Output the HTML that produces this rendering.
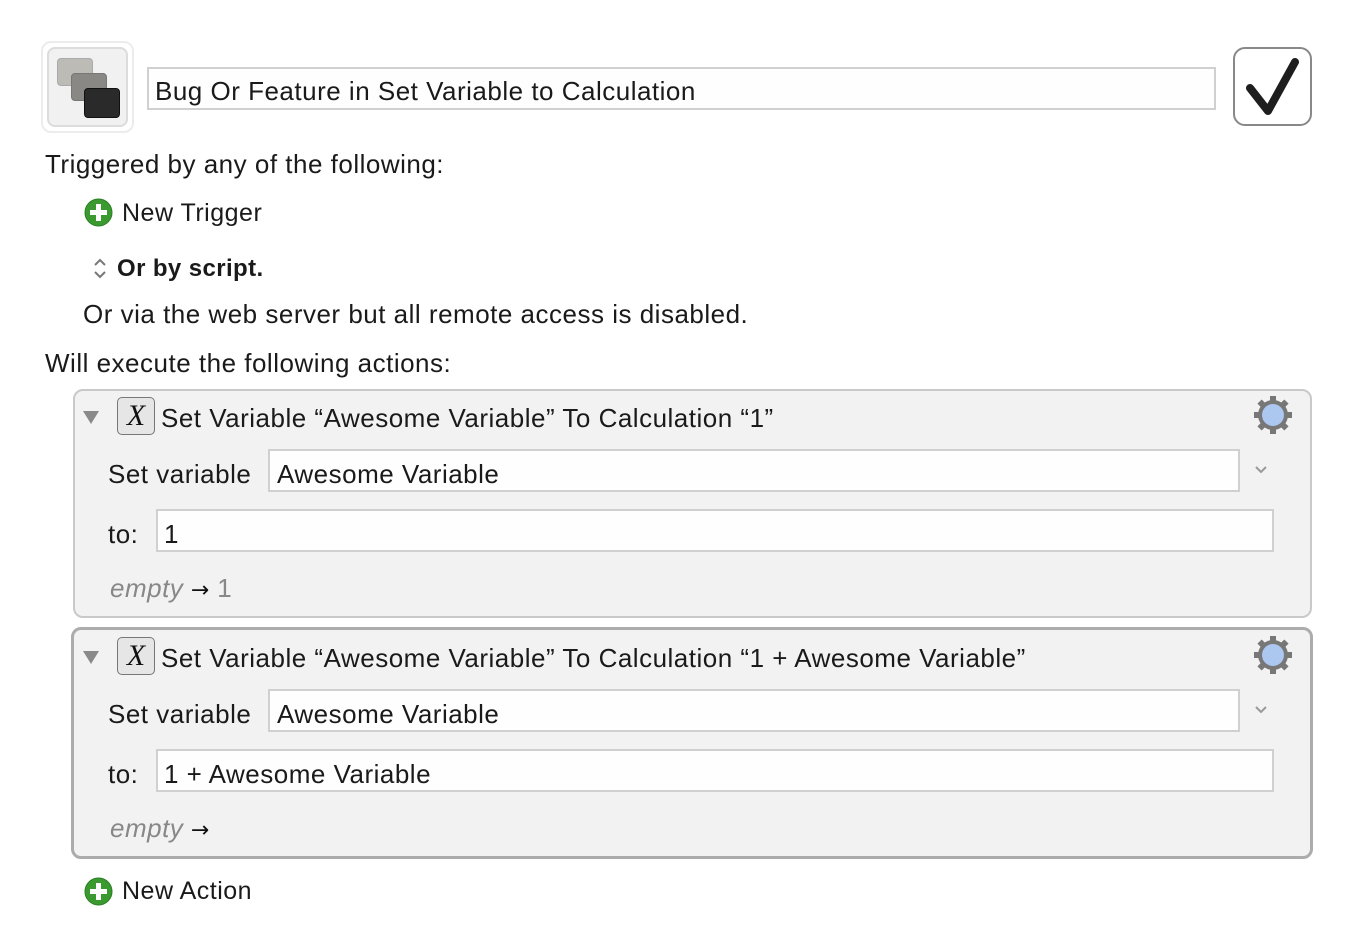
<!DOCTYPE html>
<html><head><meta charset="utf-8"><style>
body{margin:0;width:1354px;height:946px;background:#fff;font-family:"Liberation Sans",sans-serif;color:#1a1a1a;position:relative;overflow:hidden}
.a{position:absolute;white-space:nowrap;line-height:30px;font-size:26px;letter-spacing:0.5px}
.box{position:absolute;background:#f2f2f2;border-radius:10px;box-sizing:border-box}
.field{position:absolute;background:#fefefe;border:2px solid #d0d0d0;box-sizing:border-box}
.xi{position:absolute;width:38px;height:38px;box-sizing:border-box;border:1.5px solid #777;border-radius:5px;background:#e6e6e6;font-family:"Liberation Serif",serif;font-style:italic;font-size:30px;line-height:36px;text-align:center;color:#111}
.tri{position:absolute;width:0;height:0;border-left:8px solid transparent;border-right:8px solid transparent;border-top:13px solid #8a8a8a}
.gray{color:#888;font-style:italic}
.ar{font-family:"DejaVu Sans",sans-serif;font-size:22px;color:#111}
</style></head><body>
<div style="position:absolute;left:41px;top:41px;width:93px;height:92px;border:2px solid #ececec;border-radius:10px;box-sizing:border-box;background:#fff"></div>
<div style="position:absolute;left:47px;top:47px;width:81px;height:80px;border:2px solid #dcdcdc;border-radius:8px;box-sizing:border-box;background:#f1f1f1"></div>
<div style="position:absolute;left:57px;top:58px;width:34px;height:26px;background:#bdbbb6;border:1px solid #aaa;border-radius:4px"></div>
<div style="position:absolute;left:71px;top:73px;width:34px;height:26px;background:#8a8884;border:1px solid #777;border-radius:4px"></div>
<div style="position:absolute;left:84px;top:88px;width:34px;height:28px;background:#2a2a2a;border:1px solid #111;border-radius:4px"></div>

<div class="field" style="left:147px;top:67px;width:1069px;height:43px"></div>
<div class="a" style="left:155px;top:76px">Bug Or Feature in Set Variable to Calculation</div>

<div style="position:absolute;left:1233px;top:47px;width:79px;height:79px;border:2.5px solid #888;border-radius:12px;box-sizing:border-box;background:#fff"></div>
<svg style="position:absolute;left:1233px;top:47px" width="79" height="79"><path d="M17 41 L35 64 L62 15" fill="none" stroke="#1e1e1e" stroke-width="8" stroke-linecap="round" stroke-linejoin="round"/></svg>

<div class="a" style="left:45px;top:149px">Triggered by any of the following:</div>
<svg style="position:absolute;left:84px;top:198px" width="29" height="29"><circle cx="14.5" cy="14.5" r="13.5" fill="#3a9a2f" stroke="#2a7f22" stroke-width="1"/><rect x="12" y="6" width="5" height="17" fill="#fff"/><rect x="6" y="12" width="17" height="5" fill="#fff"/></svg>
<div class="a" style="left:122px;top:198px;font-size:25px">New Trigger</div>
<svg style="position:absolute;left:92px;top:257px" width="16" height="24"><path d="M3 8 L8 3 L13 8 M3 15 L8 20 L13 15" fill="none" stroke="#777" stroke-width="2"/></svg>
<div class="a" style="left:117px;top:254px;font-weight:bold;font-size:24px;letter-spacing:0.4px">Or by script.</div>
<div class="a" style="left:83px;top:299px">Or via the web server but all remote access is disabled.</div>
<div class="a" style="left:45px;top:348px">Will execute the following actions:</div>

<div class="box" style="left:73px;top:389px;width:1239px;height:229px;border:2px solid #c9c9c9"></div>
<div class="tri" style="left:83px;top:411px"></div>
<div class="xi" style="left:117px;top:397px">X</div>
<div class="a" style="left:161px;top:403px">Set Variable “Awesome Variable” To Calculation “1”</div>
<svg style="position:absolute;left:1253px;top:395px" width="40" height="40" viewBox="-20 -20 40 40"><g fill="#777"><circle r="15"/><rect x="-3" y="-19" width="6" height="38"/><rect x="-3" y="-19" width="6" height="38" transform="rotate(45)"/><rect x="-3" y="-19" width="6" height="38" transform="rotate(90)"/><rect x="-3" y="-19" width="6" height="38" transform="rotate(135)"/></g><circle r="11" fill="#adc8f0"/></svg>
<div class="a" style="left:108px;top:459px">Set variable</div>
<div class="field" style="left:268px;top:449px;width:972px;height:43px"></div>
<div class="a" style="left:277px;top:459px">Awesome Variable</div>
<svg style="position:absolute;left:1254px;top:465px" width="14" height="10"><path d="M2 2 L7 7 L12 2" fill="none" stroke="#999" stroke-width="2"/></svg>
<div class="a" style="left:108px;top:519px">to:</div>
<div class="field" style="left:156px;top:509px;width:1118px;height:43px"></div>
<div class="a" style="left:164px;top:519px">1</div>
<div class="a" style="left:110px;top:573px"><span class="gray">empty</span><span class="ar"> → </span><span style="color:#888">1</span></div>

<div class="box" style="left:71px;top:627px;width:1242px;height:232px;border:3px solid #acacac"></div>
<div class="tri" style="left:83px;top:651px"></div>
<div class="xi" style="left:117px;top:637px">X</div>
<div class="a" style="left:161px;top:643px">Set Variable “Awesome Variable” To Calculation “1 + Awesome Variable”</div>
<svg style="position:absolute;left:1253px;top:635px" width="40" height="40" viewBox="-20 -20 40 40"><g fill="#777"><circle r="15"/><rect x="-3" y="-19" width="6" height="38"/><rect x="-3" y="-19" width="6" height="38" transform="rotate(45)"/><rect x="-3" y="-19" width="6" height="38" transform="rotate(90)"/><rect x="-3" y="-19" width="6" height="38" transform="rotate(135)"/></g><circle r="11" fill="#adc8f0"/></svg>
<div class="a" style="left:108px;top:699px">Set variable</div>
<div class="field" style="left:268px;top:689px;width:972px;height:43px"></div>
<div class="a" style="left:277px;top:699px">Awesome Variable</div>
<svg style="position:absolute;left:1254px;top:705px" width="14" height="10"><path d="M2 2 L7 7 L12 2" fill="none" stroke="#999" stroke-width="2"/></svg>
<div class="a" style="left:108px;top:759px">to:</div>
<div class="field" style="left:156px;top:749px;width:1118px;height:43px"></div>
<div class="a" style="left:164px;top:759px">1 + Awesome Variable</div>
<div class="a" style="left:110px;top:813px"><span class="gray">empty</span><span class="ar"> →</span></div>

<svg style="position:absolute;left:84px;top:877px" width="29" height="29"><circle cx="14.5" cy="14.5" r="13.5" fill="#3a9a2f" stroke="#2a7f22" stroke-width="1"/><rect x="12" y="6" width="5" height="17" fill="#fff"/><rect x="6" y="12" width="17" height="5" fill="#fff"/></svg>
<div class="a" style="left:122px;top:876px;font-size:25px">New Action</div>
</body></html>
